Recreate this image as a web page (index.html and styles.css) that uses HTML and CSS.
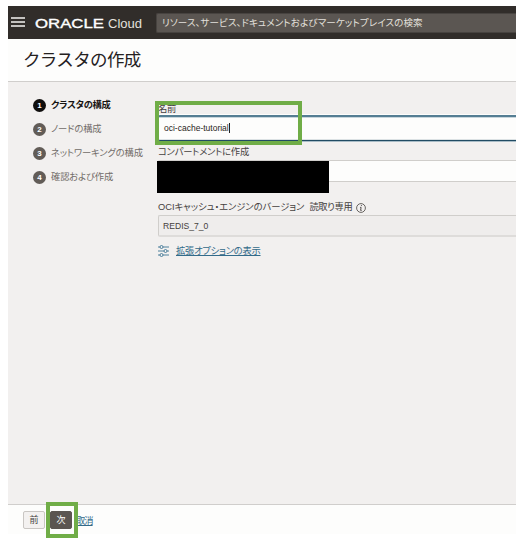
FILE: index.html
```html
<!DOCTYPE html>
<html lang="ja">
<head>
<meta charset="utf-8">
<title>クラスタの作成</title>
<link rel="stylesheet" href="styles.css">
</head>
<body>
<div class="app">
  <header class="topbar">
    <svg class="menu" width="14" height="10" viewBox="0 0 14 10"><path d="M0 1H14M0 5H14M0 9H14" stroke="#f5f4f2" stroke-width="1.4"/></svg>
    <svg class="brand" width="110" height="16" viewBox="0 0 110 16">
      <text class="oracle" x="0" y="12" textLength="69" lengthAdjust="spacingAndGlyphs">ORACLE</text>
      <text class="cloud" x="73" y="12" textLength="34" lengthAdjust="spacingAndGlyphs">Cloud</text>
    </svg>
    <div class="search"><span>リソース、サービス、ドキュメントおよびマーケットプレイスの検索</span></div>
  </header>
  <div class="titlebar"><h1>クラスタの作成</h1></div>
  <main class="content">
    <ol class="steps">
      <li class="active"><b>1</b><span>クラスタの構成</span></li>
      <li><b>2</b><span>ノードの構成</span></li>
      <li><b>3</b><span>ネットワーキングの構成</span></li>
      <li><b>4</b><span>確認および作成</span></li>
    </ol>
    <section class="form">
      <div class="field name">
        <div class="label">名前</div>
        <div class="input focus"><span>oci-cache-tutorial</span><i class="caret"></i></div>
        <div class="mark mark-name"></div>
      </div>
      <div class="field compartment">
        <div class="label">コンパートメントに作成</div>
        <div class="input"></div>
        <div class="redacted"></div>
      </div>
      <div class="field version">
        <div class="label"><span>OCIキャッシュ・エンジンのバージョン</span><span class="readonly">読取り専用</span>
          <svg width="10" height="10" viewBox="0 0 10 10"><circle cx="5" cy="5" r="4.4" fill="none" stroke="#45413e" stroke-width=".8"/><path d="M5.5 2.1L5.3 3.1M4.1 4.4H5.1L4.6 7.4H5.7" fill="none" stroke="#45413e" stroke-width=".9"/></svg>
        </div>
        <div class="input disabled"><span>REDIS_7_0</span></div>
      </div>
      <div class="advanced">
        <svg width="11" height="12" viewBox="0 0 11 12" fill="none" stroke="#3c7493" stroke-width=".9"><path d="M0 2H2M5 2H11M0 6H6M9 6H11M0 10H2M5 10H11"/><circle cx="3.5" cy="2" r="1.5"/><circle cx="7.5" cy="6" r="1.5"/><circle cx="3.5" cy="10" r="1.5"/></svg>
        <a>拡張オプションの表示</a>
      </div>
    </section>
  </main>
  <footer class="footer">
    <div class="btn">前</div>
    <div class="btn primary">次<div class="mark mark-next"></div></div>
    <a class="cancel">取消</a>
  </footer>
</div>
</body>
</html>
```
FILE: styles.css
```css
* { box-sizing: border-box; }
html { background: #fff; }
body { margin: 0; min-height: 544px; padding: 6px 0 0 8px; background: #fff; font-family: "Liberation Sans", "Noto Sans CJK JP", sans-serif; font-size: 9.3px; font-feature-settings: "palt"; color: #45413e; white-space: nowrap; }
.app { width: 508px; height: 528px; display: flex; flex-direction: column; background: #f2f0ef; }
.topbar { height: 33px; flex: none; background: #312d2a; display: flex; align-items: center; padding-left: 3px; }
.menu { flex: none; margin-right: 10px; margin-top: -1px; }
.brand { flex: none; margin-right: 11px; margin-top: 2px; overflow: visible; }
.oracle { font: 12.5px "Liberation Sans", sans-serif; fill: #fff; stroke: #fff; stroke-width: .35px; }
.cloud { font: 13.5px "Liberation Sans", sans-serif; fill: #e4e1dd; }
.search { flex: 1; height: 20px; margin-top: 1px; border: 1px solid #474340; border-right: 0; border-radius: 2px 0 0 2px; background: #5b5652; color: #e3e0dc; padding-left: 5px; line-height: 17px; font-size: 9.5px; letter-spacing: .13px; }
.titlebar { height: 43px; flex: none; background: #fdfdfc; border-bottom: 1px solid #d0cecc; padding-left: 15px; }
h1 { margin: 0; font: 400 17.5px/40px "Noto Sans CJK JP", sans-serif; letter-spacing: -.65px; color: #25211f; }
.content { flex: 1; display: flex; }
.steps { list-style: none; margin: 0; padding: 11px 0 0 25px; width: 150px; flex: none; font-size: 9.3px; letter-spacing: -.15px; color: #716c68; }
.steps li { height: 24px; display: flex; align-items: center; }
.steps li span { margin-top: -2px; }
.steps b { width: 13px; height: 13px; margin-right: 5px; border-radius: 50%; background: #625c57; color: #fff; font: bold 8px/13px "Liberation Sans", sans-serif; text-align: center; letter-spacing: 0; }
.steps .active { color: #171412; font-weight: bold; letter-spacing: -.3px; }
.steps .active b { background: #100e0d; }
.form { flex: 1; padding-top: 20px; min-width: 0; }
.field { position: relative; }
.label { height: 13px; line-height: 13px; display: flex; align-items: center; letter-spacing: -.2px; }
.name .label { padding-top: 2px; }
.input { height: 22px; border: 1px solid #d0cecb; border-right: 0; border-radius: 2px 0 0 2px; background: #fdfdfc; display: flex; align-items: center; }
.focus { height: 26px; padding-left: 6px; border: 0; border-top: 2px solid #557e93; border-bottom: 1px solid #214b63; box-shadow: inset 0 1px #c9d6dc, inset 0 -1px #dce2e4, 0 -1px #fdfdfc, 0 1px #a9bcc6; color: #292522; font-size: 8.5px; }
.focus span { margin-top: -1px; }
.caret { width: 1px; height: 10px; margin-top: -1px; background: #222; }
.mark { position: absolute; border: 4px solid #70ad47; pointer-events: none; }
.mark-name { left: -3px; top: -1px; width: 147px; height: 44px; }
.compartment { margin-top: 5px; }
.compartment .label { height: 14px; line-height: 11px; padding-bottom: 1px; }
.redacted { position: absolute; left: -1px; top: 15px; width: 172px; height: 32px; background: #000; }
.version { margin-top: 19px; }
.version .label { height: 14px; padding-bottom: 1px; letter-spacing: -.02px; }
.readonly { margin-left: 5px; margin-right: 4px; letter-spacing: -.4px; }
.disabled { background: #efedec; border-bottom: 2px solid #dedcda; padding-left: 4px; font-size: 8.6px; }
.advanced { margin-top: 6px; height: 15px; display: flex; align-items: center; gap: 7px; }
a { color: #326b8a; text-decoration: underline; letter-spacing: -.25px; }
.advanced a { margin-top: -1px; }
.footer { height: 30px; flex: none; background: #fdfdfc; border-top: 1px solid #d0cecc; display: flex; align-items: center; padding-left: 15px; }
.cancel { letter-spacing: -1px; }
.btn { position: relative; width: 22px; height: 18px; flex: none; border: 1px solid #c9c6c3; border-radius: 2px; background: #f3f1f0; text-align: center; line-height: 16px; font-size: 9px; margin-right: 5px; }
.primary { background: #5b5551; border-color: #5b5551; color: #fff; margin-right: 4px; }
.mark-next { left: -5px; top: -10px; width: 32px; height: 36px; }
```
